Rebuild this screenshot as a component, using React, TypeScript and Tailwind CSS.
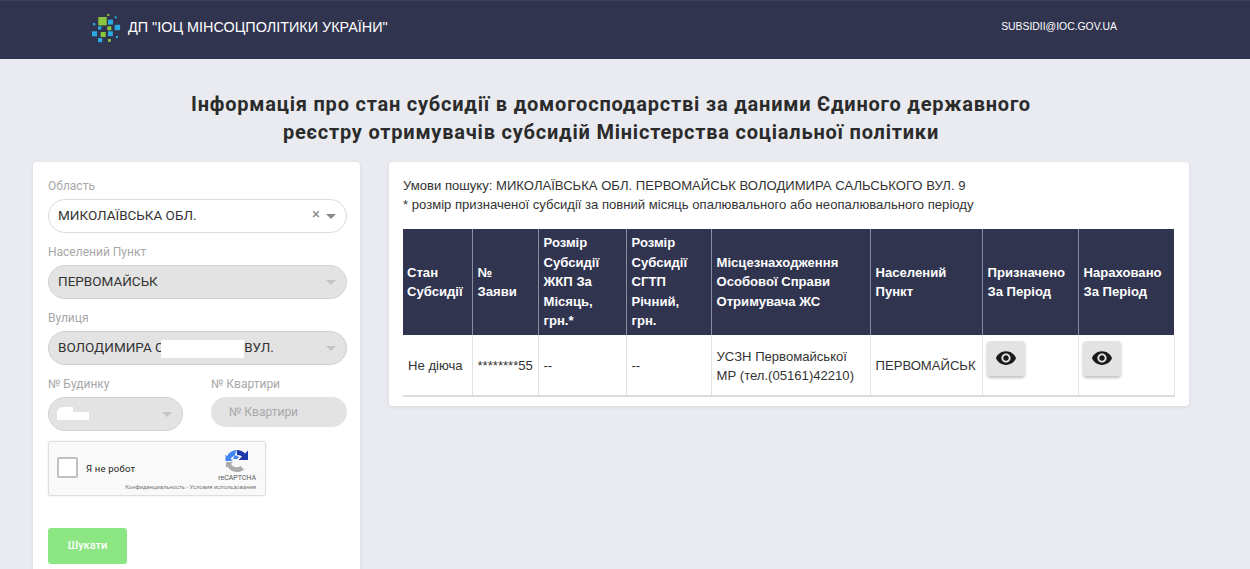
const logoSquares = [
  { x: 98.3, y: 17, s: 8.4, c: '#8cc63f' },
  { x: 108, y: 19.6, s: 5, c: '#29abe2' },
  { x: 114.7, y: 24.8, s: 5.4, c: '#29abe2' },
  { x: 107.3, y: 26.3, s: 4, c: '#8cc63f' },
  { x: 92, y: 31.3, s: 5, c: '#29abe2' },
  { x: 100.7, y: 32, s: 5, c: '#8cc63f' },
  { x: 108, y: 31.3, s: 4.8, c: '#29abe2' },
  { x: 98, y: 38, s: 4.2, c: '#29abe2' },
  { x: 108, y: 39, s: 2.8, c: '#8cc63f' },
  { x: 93, y: 23, s: 2.3, c: '#29abe2' },
  { x: 107.3, y: 14, s: 2, c: '#8cc63f' },
  { x: 114.7, y: 16.3, s: 2, c: '#29abe2' },
  { x: 98, y: 26.3, s: 3.3, c: '#29abe2' },
  { x: 116, y: 36, s: 2, c: '#29abe2' },
];

function Logo() {
  return (
    <svg width="30" height="30" viewBox="92 13 30 30" className="shrink-0">
      {logoSquares.map((r, i) => (
        <rect key={i} x={r.x} y={r.y} width={r.s} height={r.s} fill={r.c} />
      ))}
    </svg>
  );
}

function Caret({ light }: { light?: boolean }) {
  return <span className={`w-0 h-0 border-x-[5px] border-x-transparent border-t-[5px] ${light ? 'border-t-[#c4c4c4]' : 'border-t-[#888]'}`} />;
}

function SelectField({ label, value, disabled, clearable, blot }: { label: string; value: string; disabled?: boolean; clearable?: boolean; blot?: string }) {
  return (
    <div className="relative">
      <div className="text-[12px] leading-[14px] text-[#a8a8a8] mb-[6px]">{label}</div>
      <div className={`relative h-[34px] rounded-[17px] border flex items-center pl-[9px] pr-[10px] text-[13.5px] text-[#333] ${disabled ? 'bg-[#e3e3e3] border-[#d2d2d2]' : 'bg-white border-[#dcdcdc]'}`}>
        <span className="flex-1 whitespace-pre overflow-hidden -mt-[2px]">{value}</span>
        {clearable && <span className="text-[15px] leading-[15px] text-[#888] mr-[6px] -mt-[4px]">×</span>}
        <Caret light={disabled} />
        {blot === 'street' && <div className="absolute left-[112px] top-[8px] w-[83px] h-[18px] bg-white" />}
        {blot === 'house' && (
          <>
            <div className="absolute left-[8px] top-[9px] w-[16px] h-[6px] bg-white rounded-tl-md" />
            <div className="absolute left-[8px] top-[14px] w-[32px] h-[8px] bg-white" />
          </>
        )}
      </div>
    </div>
  );
}

function Recaptcha() {
  return (
    <div className="relative w-[218px] h-[55px] bg-[#f9f9f9] border border-[#dfdfdf] rounded-[2px] shadow-[0_0_3px_rgba(0,0,0,0.08)] font-['Roboto',sans-serif]">
      <div className="absolute left-[8px] top-[15px] w-[21px] h-[21px] bg-white border-2 border-[#c1c1c1] rounded-[2px]" />
      <div className="absolute left-[37px] top-[21px] text-[9.5px] leading-[12px] text-[#222] tracking-[0.2px]">Я не робот</div>
      <svg width="24" height="24" viewBox="0 0 24 24" className="absolute left-[176px] top-[7px]">
        <path d="M12 1 A11 11 0 0 1 20 4.5 L23 1.5 V11 H13.5 L17 7.5 A6 6 0 0 0 12 6 Z" fill="#1c3aa9" />
        <path d="M12 1 A11 11 0 0 0 2 7.5 L0.5 5.5 V12 H8 L5.5 10 A7 7 0 0 1 12 6.5 L14 8.5 L12 10 H8 Z" fill="#4285f4" />
        <path d="M1 13 H8 L6 15 A6.5 6.5 0 0 0 15.5 17 L19 20.5 A11 11 0 0 1 2.5 17.5 L1 19 Z" fill="#ababab" />
      </svg>
      <div className="absolute right-[9px] top-[32px] text-[7px] leading-[9px] text-[#555]">reCAPTCHA</div>
      <div className="absolute right-[9px] top-[42px] text-[5.8px] leading-[7px] text-[#777] whitespace-nowrap">Конфиденциальность - Условия использования</div>
    </div>
  );
}

function EyeButton() {
  return (
    <button className="w-[38px] h-[35px] rounded-[4px] bg-[#e3e3e3] shadow-[0_2px_3px_rgba(0,0,0,0.25)] flex items-center justify-center">
      <svg width="22" height="22" viewBox="0 0 24 24" fill="#1a1a1a" className="-mt-[2px]">
        <path d="M12 4.5C7 4.5 2.73 7.61 1 12c1.73 4.39 6 7.5 11 7.5s9.27-3.11 11-7.5c-1.73-4.39-6-7.5-11-7.5zM12 17c-2.76 0-5-2.24-5-5s2.24-5 5-5 5 2.24 5 5-2.24 5-5 5zm0-8c-1.66 0-3 1.34-3 3s1.34 3 3 3 3-1.34 3-3-1.34-3-3-3z" />
      </svg>
    </button>
  );
}

const columns = [
  { w: 'w-[69px]', head: ['Стан', 'Субсидії'] },
  { w: 'w-[66px]', head: ['№', 'Заяви'] },
  { w: 'w-[88px]', head: ['Розмір', 'Субсидії', 'ЖКП За', 'Місяць,', 'грн.*'] },
  { w: 'w-[85px]', head: ['Розмір', 'Субсидії', 'СГТП', 'Річний,', 'грн.'] },
  { w: 'w-[159px]', head: ['Місцезнаходження', 'Особової Справи', 'Отримувача ЖС'] },
  { w: 'w-[112px]', head: ['Населений', 'Пункт'] },
  { w: 'w-[96px]', head: ['Призначено', 'За Період'] },
  { w: 'w-[96px]', head: ['Нараховано', 'За Період'] },
];

export default function App() {
  return (
    <div className="h-[569px] overflow-hidden bg-[#e9ebf1] font-['Roboto',sans-serif]">
      {/* Header */}
      <header className="h-[59px] bg-[#31344f] border-t border-[#3d4060] flex items-center justify-between pl-[92px] pr-[133px] font-['Liberation_Sans',sans-serif] text-white">
        <div className="flex items-center gap-[6px] -mt-[4px]">
          <Logo />
          <span className="text-[14.4px]">ДП "ІОЦ МІНСОЦПОЛІТИКИ УКРАЇНИ"</span>
        </div>
        <span className="text-[10.4px] -mt-[6px]">SUBSIDII@IOC.GOV.UA</span>
      </header>

      <main className="px-[33px]">
        <h1 className="w-[1156px] pt-[31px] pb-[16px] text-center text-[20px] leading-[28px] font-bold text-[#2b2b2b] tracking-[0.78px]">
          Інформація про стан субсидії в домогосподарстві за даними Єдиного державного
          <br />
          реєстру отримувачів субсидій Міністерства соціальної політики
        </h1>

        <div className="flex items-start gap-[29px]">
          {/* Search form */}
          <section className="w-[327px] h-[440px] bg-white rounded-[4px] shadow-[0_1px_4px_rgba(0,0,0,0.08)] pt-[17px] pl-[15px] pr-[13px]">
            <div className="flex flex-col gap-[12px]">
              <SelectField label="Область" value="МИКОЛАЇВСЬКА ОБЛ." clearable />
              <SelectField label="Населений Пункт" value="ПЕРВОМАЙСЬК" disabled />
              <SelectField label="Вулиця" value="ВОЛОДИМИРА С                        ВУЛ." disabled blot="street" />
              <div className="flex gap-[28px]">
                <div className="w-[135px]">
                  <SelectField label="№ Будинку" value="" disabled blot="house" />
                </div>
                <div className="w-[136px]">
                  <div className="text-[12px] leading-[14px] text-[#a8a8a8] mb-[6px]">№ Квартири</div>
                  <div className="h-[30px] rounded-[15px] bg-[#e3e3e3] pl-[18px] flex items-center text-[12px] text-[#a8a8a8]">№ Квартири</div>
                </div>
              </div>
            </div>
            <div className="mt-[10px]">
              <Recaptcha />
            </div>
            <button className="mt-[32px] w-[79px] h-[36px] rounded-[3px] bg-[#8ce683] text-white text-[11px] font-medium">Шукати</button>
          </section>

          {/* Result */}
          <section className="w-[800px] h-[244px] bg-white rounded-[4px] shadow-[0_1px_4px_rgba(0,0,0,0.08)] pt-[14px] px-[14px] font-['Liberation_Sans',sans-serif] text-[#333]">
            <p className="text-[13.1px] leading-[19px]">Умови пошуку: МИКОЛАЇВСЬКА ОБЛ. ПЕРВОМАЙСЬК ВОЛОДИМИРА САЛЬСЬКОГО ВУЛ. 9</p>
            <p className="text-[13.1px] leading-[19px]">* розмір призначеної субсидії за повний місяць опалювального або неопалювального періоду</p>
            <table className="mt-[15px] w-[771px] table-fixed border-collapse">
              <thead>
                <tr className="h-[106px] bg-[#31344f] text-white">
                  {columns.map((col, i) => (
                    <th key={i} className={`${col.w} border-r border-[#8a8ca0] last:border-r-0 pl-[5px] first:pl-[4px] text-left text-[13.1px] font-bold leading-[19.5px] align-middle`}>
                      {col.head.map((line) => (
                        <div key={line}>{line}</div>
                      ))}
                    </th>
                  ))}
                </tr>
              </thead>
              <tbody>
                <tr className="h-[61px] border-b-2 border-[#dcdcdc] text-[13.1px] leading-[19.5px]">
                  <td className="border-r border-[#e2e2e2] pl-[5px] pt-[2px]">Не діюча</td>
                  <td className="border-r border-[#e2e2e2] pl-[5px] pt-[2px]">********55</td>
                  <td className="border-r border-[#e2e2e2] pl-[5px] pt-[2px]">--</td>
                  <td className="border-r border-[#e2e2e2] pl-[5px] pt-[2px]">--</td>
                  <td className="border-r border-[#e2e2e2] pl-[5px] pt-[2px]">
                    <div className="whitespace-nowrap">УСЗН Первомайської</div>
                    <div className="whitespace-nowrap">МР (тел.(05161)42210)</div>
                  </td>
                  <td className="border-r border-[#e2e2e2] pl-[5px] pt-[2px] whitespace-nowrap">ПЕРВОМАЙСЬК</td>
                  <td className="border-r border-[#e2e2e2] pl-[4px] align-top pt-[6px]"><EyeButton /></td>
                  <td className="border-r border-[#e2e2e2] pl-[4px] align-top pt-[6px]"><EyeButton /></td>
                </tr>
              </tbody>
            </table>
          </section>
        </div>
      </main>
    </div>
  );
}
